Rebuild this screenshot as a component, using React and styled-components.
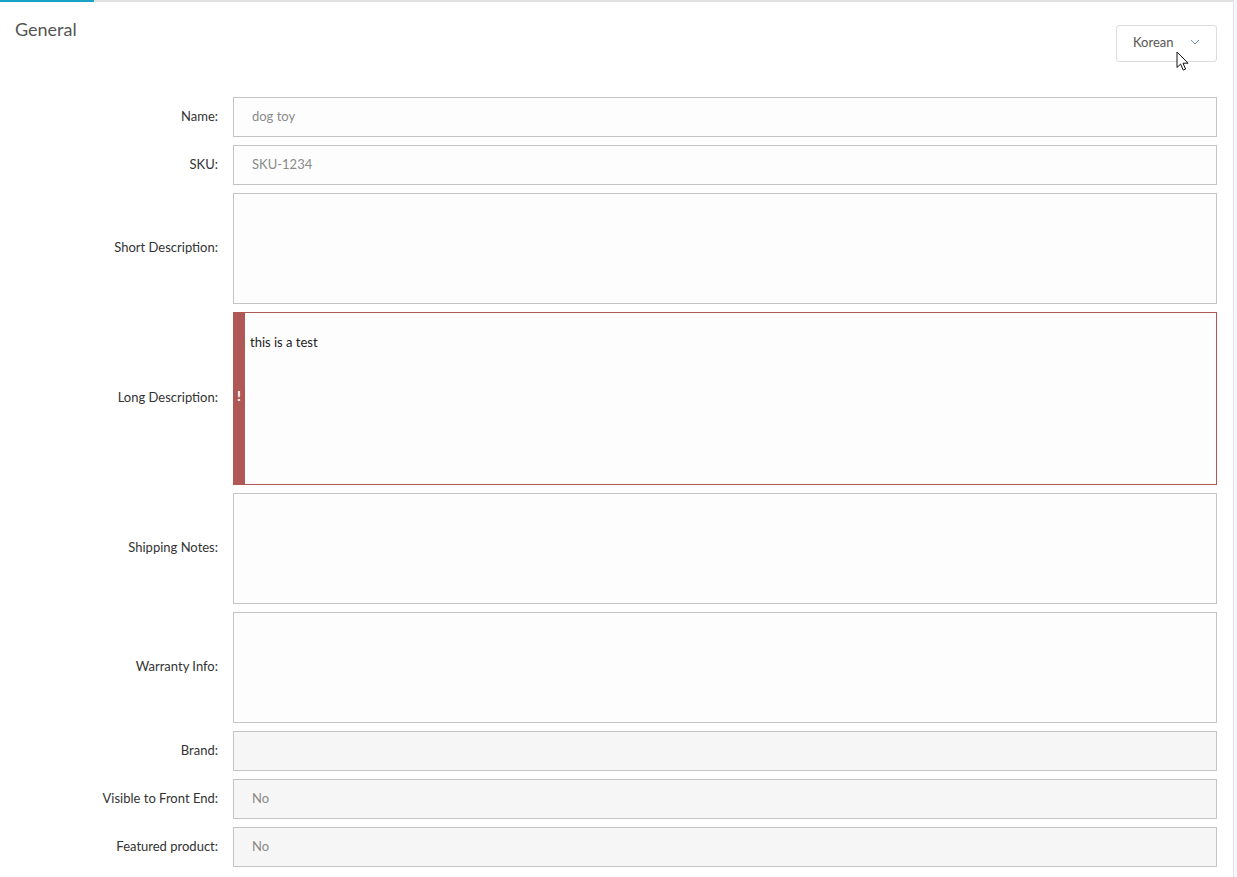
import React from "react";
import styled, { createGlobalStyle } from "styled-components";

const colors = {
  text: "#333333",
  muted: "#8a8a8a",
  border: "#c4c4c4",
  light: "#e2e2e2",
  brand: "#17a2c6",
  error: "#b05855",
};

const GlobalStyle = createGlobalStyle`
  html, body {
    margin: 0;
    padding: 0;
    background: #f5f7fa;
    font-family: Lato, "Open Sans", Arial, sans-serif;
  }
  * { box-sizing: border-box; }
`;

const Panel = styled.div`
  position: relative;
  width: 1234px;
  min-height: 877px;
  background: #ffffff;
  border-right: 1px solid ${colors.light};
`;

const TabLine = styled.div`
  height: 2px;
  background: ${colors.light};
  display: flex;
`;

const ActiveTab = styled.div`
  width: 94px;
  background: ${colors.brand};
`;

const Header = styled.div`
  display: flex;
  justify-content: space-between;
  align-items: flex-start;
  padding: 17px 16px 0 15px;
  height: 95px;
`;

const Title = styled.h2`
  margin: 0;
  font-size: 18px;
  line-height: 20px;
  font-weight: 400;
  color: #555;
`;

const LangSelect = styled.div`
  position: relative;
  margin-top: 6px;
  width: 101px;
  height: 37px;
  border: 1px solid #dcdcdc;
  border-radius: 3px;
  display: flex;
  align-items: center;
  padding: 0 0 3px 16px;
  gap: 16px;
  font-size: 13px;
  line-height: 14px;
  color: #555;
`;

const Cursor = styled.svg`
  position: absolute;
  left: 59px;
  top: 25px;
`;

const Form = styled.div`
  display: flex;
  flex-direction: column;
  gap: 8px;
  padding-right: 16px;
`;

const Row = styled.div`
  display: grid;
  grid-template-columns: 218px 1fr;
  column-gap: 15px;
  align-items: center;
`;

const Label = styled.label`
  text-align: right;
  font-size: 13px;
  line-height: 14px;
  padding-bottom: ${(p) => (p.$tall ? 4 : 2)}px;
  color: ${colors.text};
`;

const Field = styled.div`
  position: relative;
  height: ${(p) => p.$h || 40}px;
  border: 1px solid ${(p) => (p.$error ? colors.error : colors.border)};
  background: ${(p) => (p.$disabled ? "#f6f6f6" : "#fdfdfd")};
  display: flex;
  align-items: ${(p) => (p.$multi ? "flex-start" : "center")};
  padding: ${(p) => (p.$multi ? "22px 16px" : "0 18px 2px")};
  padding-left: ${(p) => (p.$error ? "16px" : "18px")};
  font-size: 13px;
  line-height: 14px;
  color: ${(p) => (p.$dark ? "#222" : colors.muted)};
`;

const ErrorBar = styled.div`
  align-self: stretch;
  margin: -23px 5px -23px -17px;
  width: 12px;
  flex: 0 0 12px;
  background: ${colors.error};
  color: #fff;
  font-weight: 700;
  font-size: 14px;
  padding-bottom: 6px;
  display: flex;
  align-items: center;
  justify-content: center;
`;

const fields = [
  { label: "Name:", value: "dog toy" },
  { label: "SKU:", value: "SKU-1234" },
  { label: "Short Description:", h: 111, multi: true },
  { label: "Long Description:", h: 173, multi: true, error: true, value: "this is a test" },
  { label: "Shipping Notes:", h: 111, multi: true },
  { label: "Warranty Info:", h: 111, multi: true },
  { label: "Brand:", disabled: true },
  { label: "Visible to Front End:", value: "No", disabled: true },
  { label: "Featured product:", value: "No", disabled: true },
];

const App = () => {
  return (
    <>
      <GlobalStyle />
      <Panel>
        <TabLine>
          <ActiveTab />
        </TabLine>
        <Header>
          <Title>General</Title>
          <LangSelect>
            Korean
            <svg width="10" height="6" viewBox="0 0 10 6">
              <path d="M1 1l4 4 4-4" fill="none" stroke="#6a8fb0" strokeWidth="1" />
            </svg>
            <Cursor width="14" height="21" viewBox="0 0 14 21">
              <path
                d="M1 1v15.5l3.6-3.4 2.6 6 2.4-1-2.6-5.9h5.1z"
                fill="#fff"
                stroke="#111"
                strokeWidth="1"
                strokeLinejoin="round"
              />
            </Cursor>
          </LangSelect>
        </Header>
        <Form>
          {fields.map((f) => (
            <Row key={f.label}>
              <Label $tall={f.h && f.h > 40}>{f.label}</Label>
              <Field
                $h={f.h}
                $multi={f.multi}
                $error={f.error}
                $disabled={f.disabled}
                $dark={f.error}
              >
                {f.error && <ErrorBar>!</ErrorBar>}
                {f.value}
              </Field>
            </Row>
          ))}
        </Form>
      </Panel>
    </>
  );
};

export default App;
